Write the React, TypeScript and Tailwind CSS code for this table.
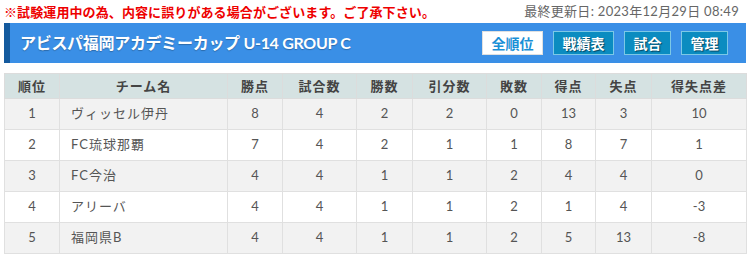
import React from "react";

const cols = [
  { label: "順位", w: "w-[55px]" },
  { label: "チーム名", w: "w-[168px]" },
  { label: "勝点", w: "w-[55px]" },
  { label: "試合数", w: "w-[74px]" },
  { label: "勝数", w: "w-[56px]" },
  { label: "引分数", w: "w-[74px]" },
  { label: "敗数", w: "w-[55px]" },
  { label: "得点", w: "w-[54px]" },
  { label: "失点", w: "w-[56px]" },
  { label: "得失点差", w: "w-[95px]" },
];

const rows = [
  ["1", "ヴィッセル伊丹", "8", "4", "2", "2", "0", "13", "3", "10"],
  ["2", "FC琉球那覇", "7", "4", "2", "1", "1", "8", "7", "1"],
  ["3", "FC今治", "4", "4", "1", "1", "2", "4", "4", "0"],
  ["4", "アリーバ", "4", "4", "1", "1", "2", "1", "4", "-3"],
  ["5", "福岡県B", "4", "4", "1", "1", "2", "5", "13", "-8"],
];

const font = "font-['Lato','Noto_Sans_CJK_JP',sans-serif]";

export default function App() {
  return (
    <div className={`w-[750px] h-[258px] bg-white px-[4px] ${font}`}>
      <div className="flex items-center justify-between h-[23px] pt-[1px]">
        <span className="text-[13px] font-bold text-[#ee0000] font-['Noto_Sans_CJK_JP',sans-serif] tracking-[0.1px]">
          ※試験運用中の為、内容に誤りがある場合がございます。ご了承下さい。
        </span>
        <span className="text-[13px] text-[#666] pr-[7px] tracking-[0.3px] font-['Lato','Noto_Sans_CJK_JP',sans-serif]">
          最終更新日: 2023年12月29日 08:49
        </span>
      </div>
      <div className="flex items-center justify-between h-[40px] bg-[#3a8fe6] border-l-[6px] border-[#145a9e] pl-[10px] pr-[18px]">
        <h1 className="text-white font-bold text-[16px] tracking-[-0.3px] font-['Lato','Noto_Sans_CJK_JP',sans-serif] [text-shadow:0_1px_1px_rgba(0,0,0,0.25)]">
          アビスパ福岡アカデミーカップ U-14 GROUP C
        </h1>
        <div className="flex gap-[10px]">
          <button className="w-[61px] h-[24px] bg-white text-[#1a8fd6] font-bold text-[14px] border border-[#e0e0e0] font-['Noto_Sans_CJK_JP',sans-serif]">
            全順位
          </button>
          {[
            ["戦績表", "w-[61px]"],
            ["試合", "w-[47px]"],
            ["管理", "w-[47px]"],
          ].map(([t, w]) => (
            <button
              key={t}
              className={`${w} h-[24px] bg-[#0b8cc0] text-white font-bold text-[14px] border border-[#7cc8e6] font-['Noto_Sans_CJK_JP',sans-serif] [text-shadow:1px_1px_1px_rgba(0,0,0,0.5)]`}
            >
              {t}
            </button>
          ))}
        </div>
      </div>
      <table className="mt-[10px] border-collapse text-[13px] text-[#555] w-[742px] table-fixed">
        <thead>
          <tr className="h-[25px] bg-[#d5e2e2]">
            {cols.map((c) => (
              <th
                key={c.label}
                className={`${c.w} border border-[#dcdcdc] font-bold text-[#444] text-center p-0 font-['Noto_Sans_CJK_JP',sans-serif] tracking-[1px]`}
              >
                {c.label}
              </th>
            ))}
          </tr>
        </thead>
        <tbody>
          {rows.map((r, i) => (
            <tr key={i} className={`h-[31px] ${i % 2 === 0 ? "bg-[#f2f2f2]" : "bg-white"}`}>
              {r.map((v, j) => (
                <td
                  key={j}
                  className={`border border-[#e0e0e0] p-0 ${
                    j === 1 ? "text-left pl-[11px] tracking-[1px]" : "text-center"
                  }`}
                >
                  {v}
                </td>
              ))}
            </tr>
          ))}
        </tbody>
      </table>
    </div>
  );
}
